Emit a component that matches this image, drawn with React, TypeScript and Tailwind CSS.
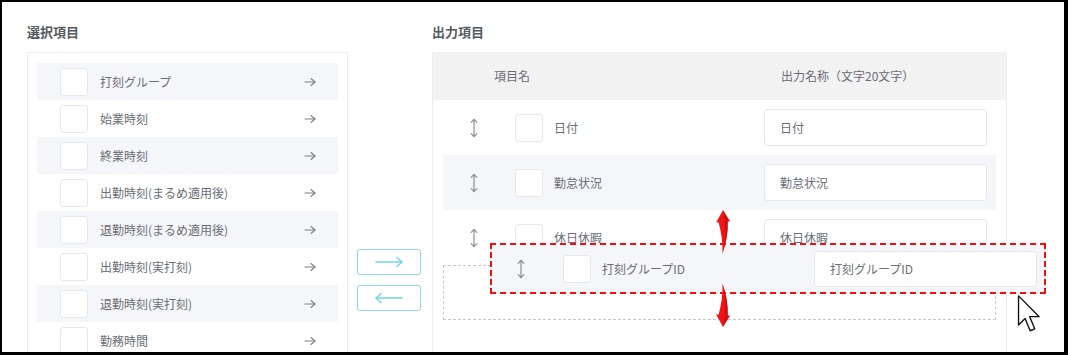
import React from "react";

const leftItems = [
  "打刻グループ",
  "始業時刻",
  "終業時刻",
  "出勤時刻(まるめ適用後)",
  "退勤時刻(まるめ適用後)",
  "出勤時刻(実打刻)",
  "退勤時刻(実打刻)",
  "勤務時間",
];

const rightItems = ["日付", "勤怠状況", "休日休暇"];

function Handle() {
  return (
    <svg width="10" height="20" viewBox="0 0 10 20" fill="none" stroke="#8a8f99" strokeWidth="1.2" strokeLinecap="round" strokeLinejoin="round">
      <path d="M5 1.5 L5 18.5" />
      <path d="M2.2 4.3 L5 1.5 L7.8 4.3" />
      <path d="M2.2 15.7 L5 18.5 L7.8 15.7" />
    </svg>
  );
}

function SmallArrow() {
  return (
    <svg width="12" height="10" viewBox="0 0 12 10" fill="none" stroke="#7b7f88" strokeWidth="1.1" strokeLinecap="round" strokeLinejoin="round">
      <path d="M1 5 L11 5" />
      <path d="M7 1.5 L11 5 L7 8.5" />
    </svg>
  );
}

function LongArrow({ dir }: { dir: "right" | "left" }) {
  return (
    <svg width="28" height="12" viewBox="0 0 28 12" fill="none" stroke="#6fd3e6" strokeWidth="1.3" strokeLinecap="round" strokeLinejoin="round">
      {dir === "right" ? (
        <>
          <path d="M1 6 L27 6" />
          <path d="M22 1.5 L27 6 L22 10.5" />
        </>
      ) : (
        <>
          <path d="M1 6 L27 6" />
          <path d="M6 1.5 L1 6 L6 10.5" />
        </>
      )}
    </svg>
  );
}

function Check() {
  return <div className="w-[28px] h-[28px] shrink-0 bg-white border border-[#e6e8ec] rounded-[3px]" />;
}

function RedArrow({ down }: { down?: boolean }) {
  return (
    <svg width="16" height="44" viewBox="0 0 16 44" className={down ? "-scale-y-100" : ""}>
      <path
        d="M8 0 L15 11.5 L12.8 11.2 C13.2 22 11.2 33 7.5 43.5 C8 33 6.2 22 3.6 12.2 L1 12.8 Z"
        fill="#f01414"
      />
      <path d="M8 0 L15 11.5 L12.8 11.2 C13.2 22 11.2 33 7.5 43.5 C10 33 10.5 22 9.8 11 Z" fill="#b00d0d" opacity="0.55" />
    </svg>
  );
}

function Cursor() {
  return (
    <svg width="26" height="42" viewBox="0 0 17 27" fill="#fff" stroke="#111" strokeWidth="0.9" strokeLinejoin="round">
      <path d="M1 1 L1 20 L5.3 15.8 L8.6 23.8 L11.6 22.5 L8.3 14.6 L14.5 14.6 Z" />
    </svg>
  );
}

export default function App() {
  const font = { fontFamily: '"Noto Sans CJK JP", "Noto Sans", sans-serif' };
  return (
    <div
      className="relative w-[1068px] h-[355px] overflow-hidden bg-white border-t-[2px] border-l-[2px] border-r-[4px] border-b-[3px] border-black"
      style={font}
    >
      <div className="flex pl-[25px] pt-[20px]">
        {/* Left column */}
        <div className="w-[321px] shrink-0">
          <div className="h-[30px] text-[13px] font-bold text-[#555a60] leading-[20px]">選択項目</div>
          <div className="border border-[#ececec] px-[9px] pt-[10px] h-[400px]">
            {leftItems.map((t, i) => (
              <div
                key={t}
                className={`h-[37px] flex items-center pl-[23px] pr-[22px] ${i % 2 === 0 ? "bg-[#f5f6fa]" : "bg-white"}`}
              >
                <Check />
                <span className="ml-[12px] text-[12px] text-[#6a6e74] flex-1">{t}</span>
                <SmallArrow />
              </div>
            ))}
          </div>
        </div>

        {/* Middle buttons */}
        <div className="w-[84px] shrink-0 pl-[9px] pt-[227px] flex flex-col gap-[10px]">
          <button className="w-[64px] h-[26px] border border-[#8fdcea] rounded-[3px] flex items-center justify-center bg-white">
            <LongArrow dir="right" />
          </button>
          <button className="w-[64px] h-[26px] border border-[#8fdcea] rounded-[3px] flex items-center justify-center bg-white">
            <LongArrow dir="left" />
          </button>
        </div>

        {/* Right column */}
        <div className="w-[575px] shrink-0">
          <div className="h-[30px] text-[13px] font-bold text-[#555a60] leading-[20px]">出力項目</div>
          <div className="border-l border-r border-[#ececec] h-[400px]">
            <div className="h-[48px] bg-[#f2f2f2] flex items-center text-[12px] text-[#6a6e74]">
              <span className="ml-[61px] w-[287px]">項目名</span>
              <span>出力名称（文字20文字）</span>
            </div>
            <div className="px-[10px]">
              {rightItems.map((t, i) => (
                <div
                  key={t}
                  className={`h-[55px] flex items-center pr-[9px] ${i % 2 === 1 ? "bg-[#f5f6fa]" : "bg-white"}`}
                >
                  <div className="w-[72px] pl-[26px] flex items-center">
                    <Handle />
                  </div>
                  <Check />
                  <span className="ml-[11px] text-[12px] text-[#6a6e74] flex-1">{t}</span>
                  <div className="w-[223px] h-[37px] bg-white border border-[#e6e8ec] rounded-[3px] flex items-center pl-[15px] text-[12px] text-[#6a6e74]">
                    {t}
                  </div>
                </div>
              ))}
              <div className="h-[55px] border border-dashed border-[#c8c8c8]" />
            </div>
          </div>
        </div>
      </div>

      {/* Drag ghost */}
      <div className="absolute left-[488px] top-[241px] w-[556px] h-[51px] border-2 border-dashed border-[#f01010] bg-[#f5f6fa] flex items-center pr-[7px]">
        <div className="w-[71px] pl-[24px] flex items-center">
          <Handle />
        </div>
        <Check />
        <span className="ml-[11px] text-[12px] text-[#6a6e74] flex-1">打刻グループID</span>
        <div className="w-[223px] h-[36px] bg-white border border-[#e6e8ec] rounded-[3px] flex items-center pl-[15px] text-[12px] text-[#6a6e74]">
          打刻グループID
        </div>
      </div>

      {/* Red arrows */}
      <div className="absolute left-[713px] top-[208px]">
        <RedArrow />
      </div>
      <div className="absolute left-[713px] top-[281px]">
        <RedArrow down />
      </div>

      {/* Cursor */}
      <div className="absolute left-[1015px] top-[292px]">
        <Cursor />
      </div>
    </div>
  );
}
